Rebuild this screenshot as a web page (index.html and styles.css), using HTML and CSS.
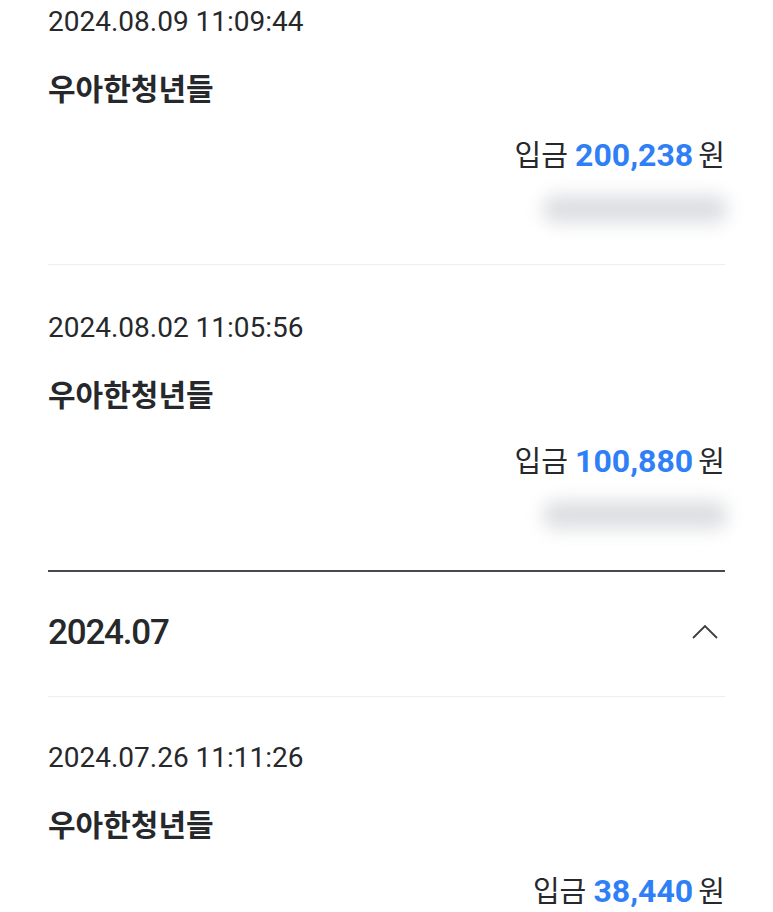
FILE: index.html
```html
<!DOCTYPE html>
<html lang="ko">
<head>
  <meta charset="UTF-8">
  <meta name="viewport" content="width=device-width, initial-scale=1.0">
  <title>입금 내역</title>
  <link rel="stylesheet" href="styles.css">
</head>
<body>
<div class="list">
  <div class="group">
    <div class="row">
      <div class="date">2024.08.09 11:09:44</div>
      <div class="name">우아한청년들</div>
      <div class="amount">입금 <b>200,238</b> 원</div>
      <div class="masked"><span class="blur"></span></div>
    </div>
    <div class="row">
      <div class="date">2024.08.02 11:05:56</div>
      <div class="name">우아한청년들</div>
      <div class="amount">입금 <b>100,880</b> 원</div>
      <div class="masked"><span class="blur"></span></div>
    </div>
  </div>

  <div class="group">
    <div class="month">
      <span>2024.07</span>
      <svg class="chevron" width="28" height="16" viewBox="0 0 28 16">
        <path d="M2 14 L14 2 L26 14" fill="none" stroke="#3a3c40" stroke-width="1.8"/>
      </svg>
    </div>
    <div class="row">
      <div class="date">2024.07.26 11:11:26</div>
      <div class="name">우아한청년들</div>
      <div class="amount">입금 <b>38,440</b> 원</div>
      <div class="masked"><span class="blur"></span></div>
    </div>
  </div>
</div>
</body>
</html>
```

FILE: styles.css
```css
body {
  margin: 0;
  background: #fff;
  color: #26282b;
  font-family: Roboto, "Noto Sans CJK KR", sans-serif;
}
.list {
  margin-top: -41px;
  padding: 0 48px;
}
.group + .group {
  border-top: 2px solid #46494e;
}
.row {
  padding: 47px 0 33px;
}
.group .month + .row {
  padding-top: 45px;
}
.row + .row {
  border-top: 1px solid #eceef1;
}
.date {
  font-size: 28px;
  line-height: 32px;
}
.name {
  margin-top: 33px;
  font-size: 30px;
  line-height: 38px;
  font-weight: 700;
}
.amount {
  margin-top: 27px;
  text-align: right;
  font-size: 29px;
  line-height: 38px;
}
.amount b {
  color: #2f80f6;
  font-size: 32px;
  font-weight: 700;
  margin-right: -2px;
}
.masked {
  margin-top: 12px;
  height: 44px;
  display: flex;
  justify-content: flex-end;
  align-items: center;
}
.blur {
  width: 184px;
  height: 28px;
  margin-right: -2px;
  background: #dcdee1;
  border-radius: 12px;
  filter: blur(9px);
}
.month {
  height: 125px;
  box-sizing: border-box;
  padding-bottom: 4px;
  display: flex;
  align-items: center;
  justify-content: space-between;
  border-bottom: 1px solid #eceef1;
  font-size: 35px;
  font-weight: 500;
  letter-spacing: -1.2px;
}
.chevron {
  margin-right: 6px;
}
```
